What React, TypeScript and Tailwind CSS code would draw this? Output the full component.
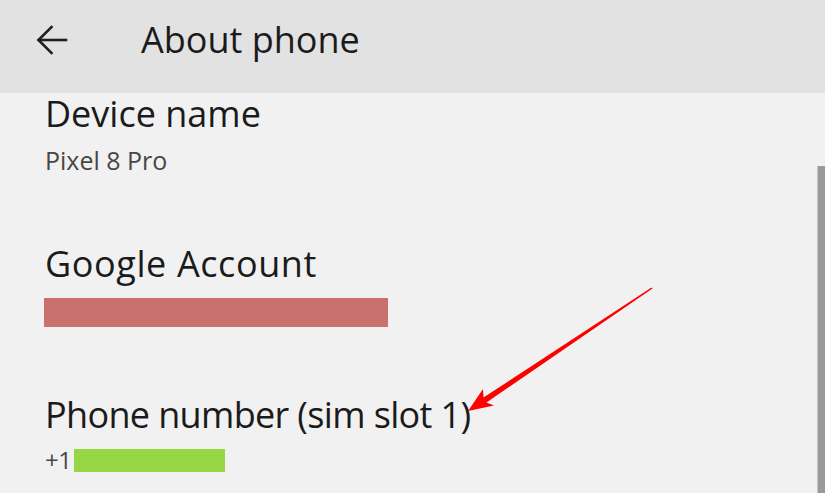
import React from "react";

const font = { fontFamily: '"Open Sans", "Noto Sans", sans-serif' };

function BackArrow() {
  return (
    <svg width="32" height="32" viewBox="0 0 32 32" fill="none" stroke="#1f1f1f" strokeWidth="2.6" strokeLinecap="square">
      <path d="M30 16 H3" />
      <path d="M15.5 3 L2.5 16 L15.5 29" />
    </svg>
  );
}

function Row({
  title,
  children,
  className,
  titleClass = "",
}: {
  title: string;
  children: React.ReactNode;
  className?: string;
  titleClass?: string;
}) {
  return (
    <div className={className}>
      <div className={`text-[36px] leading-[40px] text-[#1b1b1b] ${titleClass}`}>{title}</div>
      {children}
    </div>
  );
}

export default function App() {
  return (
    <div className="relative w-[825px] h-[493px] overflow-hidden bg-[#f1f1f1]" style={font}>
      <header className="h-[93px] bg-[#e2e2e2] flex items-start pt-[20px]">
        <div className="ml-[36px] mt-[4px] w-[32px] h-[32px] flex items-center justify-center">
          <BackArrow />
        </div>
        <h1 className="ml-[73px] text-[36px] leading-[40px] text-[#1b1b1b]">About phone</h1>
      </header>

      <main className="px-[45px] pt-[1px] flex flex-col">
        <Row title="Device name">
          <div className="mt-[11px] text-[25px] leading-[30px] text-[#474747]">Pixel 8 Pro</div>
        </Row>
        <Row title="Google Account" className="mt-[69px]" titleClass="tracking-[0.6px]">
          <div className="mt-[14px] -ml-[1px] w-[344px] h-[29px] bg-[#c9716c]" />
        </Row>
        <Row title="Phone number (sim slot 1)" className="mt-[68px]" titleClass="tracking-[-0.65px]">
          <div className="mt-[10px] flex items-center">
            <span className="text-[24px] leading-[30px] text-[#474747] tracking-[-0.5px]">+1</span>
            <span className="ml-[3px] w-[151px] h-[23px] bg-[#97d645]" />
          </div>
        </Row>
      </main>

      {/* scroll indicator */}
      <div className="absolute right-0 top-[166px] bottom-0 w-[8px] bg-[#9a9a9a] border-l border-[#c8c8c8]" />

      {/* callout arrow */}
      <svg className="absolute inset-0 pointer-events-none" width="825" height="493" viewBox="0 0 825 493">
        <polygon
          points="468,411 483,389 483.5,397.5 651.5,287.5 652.5,288.5 486.5,402.5 494,405.5"
          fill="#ff0000"
        />
      </svg>
    </div>
  );
}
